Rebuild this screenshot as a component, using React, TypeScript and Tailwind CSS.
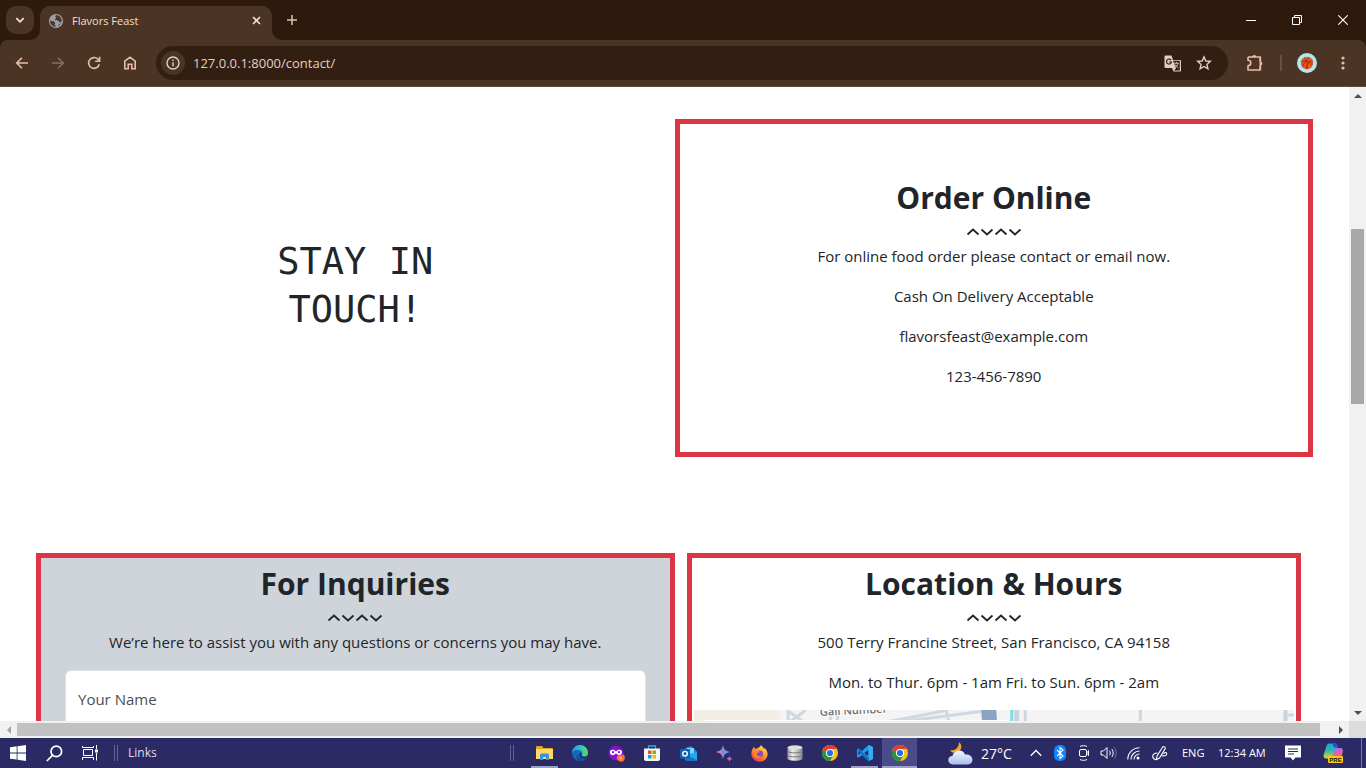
import type { ReactNode } from "react";

const uiFont = "font-['Open_Sans','Noto_Sans',sans-serif]";

function BrowserTabs() {
  return (
    <header className="flex h-10 shrink-0 items-start bg-[#2d1a0d] text-[#f2dfd5]">
      <button aria-label="Search tabs" className="mt-[6px] ml-[6px] flex h-7 w-7 items-center justify-center rounded-[10px] bg-[#4c3424]">
        <svg width="10" height="10" viewBox="0 0 10 10" fill="none" stroke="currentColor" strokeWidth="1.8">
          <path d="M1.3 3.2 5 6.8l3.7-3.6" />
        </svg>
      </button>
      <div className="relative mt-[6px] ml-[6px] flex h-[34px] w-[232px] items-center rounded-t-[10px] bg-[#4c3424] pr-[10px] pb-[5px] pl-2">
        <svg className="absolute bottom-0 -left-[10px]" width="10" height="10">
          <path d="M10 0v10H0A10 10 0 0 0 10 0z" fill="#4c3424" />
        </svg>
        <svg className="absolute -right-[10px] bottom-0" width="10" height="10">
          <path d="M0 0v10h10A10 10 0 0 1 0 0z" fill="#4c3424" />
        </svg>
        <svg width="16" height="16" viewBox="0 0 16 16">
          <circle cx="8" cy="8" r="7.1" fill="#9aa0a6" />
          <path d="M8.4 1.9c-1.500 1-1.700 1.500-.5 2.200 1.300.7-.7 1.500-1 2.500-.3 1 2.900.5 3.700 1.600.5.7.8 1.400 3.100.6a6 6 0 0 0-5.300-6.900zM2.100 7.300c1.500 1.400 4.100.6 4.800 2 .5 1-.3 1.500-.2 2.300.1.800 1.100.7.800 2.300a6 6 0 0 1-5.400-6.600z" fill="#4c3424" />
          <path d="M9.700 4.500l2.300-.3M10 12.800l2.300-2.300" stroke="#4c3424" />
        </svg>
        <span className="ml-2 flex-1 text-[11px] leading-4">Flavors Feast</span>
        <button aria-label="Close tab" className="-mr-[2px] flex h-4 w-4 items-center justify-center rounded-full">
          <svg width="9" height="9" viewBox="0 0 9 9" stroke="currentColor" strokeWidth="1.6">
            <path d="M1 1l7 7M8 1 1 8" />
          </svg>
        </button>
      </div>
      <button aria-label="New tab" className="mt-[6px] ml-[6px] flex h-7 w-7 items-center justify-center text-[#e6bfa8]">
        <svg width="10" height="10" viewBox="0 0 10 10" stroke="currentColor" strokeWidth="1.5">
          <path d="M5 0v10M0 5h10" />
        </svg>
      </button>
      <div className="ml-auto flex text-white">
        <button aria-label="Minimize" className="flex h-10 w-[46px] items-center justify-center">
          <svg width="10" height="10" stroke="currentColor"><path d="M0 5.500h10" /></svg>
        </button>
        <button aria-label="Restore" className="flex h-10 w-[46px] items-center justify-center">
          <svg width="10" height="10" fill="none" stroke="currentColor">
            <path d="M.5 2.500h7v7h-7zM2.500 2.500v-2h7v7h-2" />
          </svg>
        </button>
        <button aria-label="Close window" className="flex h-10 w-[46px] items-center justify-center">
          <svg width="10" height="10" stroke="currentColor" strokeWidth="1.1"><path d="M.3.3l9.400 9.400M9.700.3.3 9.700" /></svg>
        </button>
      </div>
    </header>
  );
}

function ToolButton({ label, dim, children }: { label: string; dim?: boolean; children: ReactNode }) {
  return (
    <button aria-label={label} className={`flex h-9 w-9 shrink-0 items-center justify-center ${dim ? "text-[#8a6c5c]" : "text-[#e6bfa8]"}`}>
      {children}
    </button>
  );
}

function Toolbar() {
  return (
    <div className="shrink-0 bg-[#2d1a0d]">
      <nav className="flex h-[47px] items-center rounded-t-lg border-b border-[#5f4a3d] bg-[#4c3424] pr-[5px] pl-1">
        <ToolButton label="Back">
          <svg width="16" height="16" viewBox="0 0 16 16" fill="none" stroke="currentColor" strokeWidth="1.6"><path d="M14 8H3M8 2.700 2.700 8 8 13.300" /></svg>
        </ToolButton>
        <ToolButton label="Forward" dim>
          <svg width="16" height="16" viewBox="0 0 16 16" fill="none" stroke="currentColor" strokeWidth="1.6"><path d="M2 8h11M8 2.700 13.300 8 8 13.300" /></svg>
        </ToolButton>
        <ToolButton label="Reload">
          <svg width="16" height="16" viewBox="0 0 16 16" fill="none" stroke="currentColor" strokeWidth="1.600"><path d="M13.300 9.200A5.400 5.400 0 1 1 12 4.300l1.300 1.400M13.600 1.800v4.500H9.200" /></svg>
        </ToolButton>
        <ToolButton label="Home">
          <svg width="16" height="16" viewBox="0 0 16 16" fill="none" stroke="currentColor" strokeWidth="1.600"><path d="M2.800 6.200 8 2.200l5.200 4v7.600H9.800V9.300H6.200v4.500H2.800z" /></svg>
        </ToolButton>
        <div className="ml-2 flex h-[34px] flex-1 items-center rounded-full bg-[#331f11] pr-3 pl-[5px] text-[#e0cfc6]">
          <button aria-label="Site information" className="flex h-6 w-6 items-center justify-center rounded-full bg-[#4c3424]">
            <svg width="14" height="14" viewBox="0 0 14 14" fill="none" stroke="currentColor" strokeWidth="1.400"><circle cx="7" cy="7" r="6" /><path d="M7 6.200v4M7 3.400v1.500" /></svg>
          </button>
          <input aria-label="Address" defaultValue="127.0.0.1:8000/contact/" className="ml-2 h-6 min-w-0 flex-1 bg-transparent text-[13px] outline-none" />
          <button aria-label="Translate" className="flex h-8 w-8 items-center justify-center">
            <svg width="17" height="17" viewBox="0 0 17 17">
              <path d="M1.500.5h6l1.500 4.500h7a1 1 0 0 1 1 1v9.500a1 1 0 0 1-1 1H9.500L8 13H1.500a1 1 0 0 1-1-1V1.500a1 1 0 0 1 1-1z" fill="#e0cfc6" />
              <path d="M9 5.800h6.800v9.700H10l2-2.300z" fill="#331f11" />
              <path d="M7.100 5.100A2.500 2.500 0 1 0 7.500 7H5.200" fill="none" stroke="#331f11" strokeWidth="1.200" />
              <path d="M9.800 8.200h5.200M12.400 7v1.200M14 8.400c-.5 2-1.700 3.300-3.500 4.400M10.800 9.500l3.700 3.700" stroke="#e0cfc6" fill="none" strokeWidth=".9" />
            </svg>
          </button>
          <button aria-label="Bookmark this tab" className="-mr-1 flex h-8 w-8 items-center justify-center">
            <svg width="16" height="16" viewBox="0 0 16 16" fill="none" stroke="currentColor" strokeWidth="1.400"><path d="M8 1.900l1.800 4.100 4.500.4-3.400 3 1 4.400L8 11.500l-3.900 2.300 1-4.400-3.400-3 4.500-.4z" /></svg>
          </button>
        </div>
        <div className="ml-[9px] flex items-center">
          <ToolButton label="Extensions">
            <svg width="18" height="18" viewBox="0 0 18 18">
              <path d="M2 3h12.300v4.600M2 3v3.200c3.700.4 3.700 5 0 5.500V16h12.300v-4.500" fill="none" stroke="currentColor" strokeWidth="1.600" strokeLinejoin="round" />
              <path d="M6.200 3a2 2 0 0 1 4 0zM14.300 7.500a2 2 0 0 1 0 4z" fill="currentColor" />
              <path d="M14.300 3v13" stroke="currentColor" strokeWidth="1.600" />
            </svg>
          </ToolButton>
          <span className="mx-[7px] h-4 w-[2px] bg-[#6b4d3b]" />
          <button aria-label="Profile" className="flex h-9 w-9 items-center justify-center">
            <svg width="20" height="20" viewBox="0 0 20 20">
              <circle cx="10" cy="10" r="10" fill="#aee7ef" />
              <circle cx="10" cy="10" r="6.200" fill="#f4511e" />
              <path d="M4.500 8.500c4-1 8-1 10.500 3.500M7 4.800c3 2 4 6 3 11.300M12.500 4.300c-3 3-6 6-7 9.500M15.500 7.500c-4 1-6 4-6.500 8" fill="none" stroke="#6d2b1c" strokeWidth=".7" />
            </svg>
          </button>
          <ToolButton label="Menu">
            <svg width="4" height="16" fill="currentColor"><circle cx="2" cy="3" r="1.600" /><circle cx="2" cy="8" r="1.600" /><circle cx="2" cy="13" r="1.600" /></svg>
          </ToolButton>
        </div>
      </nav>
    </div>
  );
}

function SectionTitle({ children }: { children: ReactNode }) {
  return (
    <>
      <h2 className="text-[30px] leading-9 font-bold">{children}</h2>
      <div className="flex h-7 items-center justify-center pt-[3px]">
        <svg width="56" height="10" viewBox="0 0 56 10" fill="none" stroke="#212529" strokeWidth="1.800">
          <path d="M1.500 7.500 7 2.500l5.500 5M15.500 2.500 21 7.500l5.500-5M29.500 7.500 35 2.500l5.500 5M43.500 2.500 49 7.500l5.500-5" />
        </svg>
      </div>
    </>
  );
}

function LocationMap() {
  return (
    <svg role="img" aria-label="Map" className="mx-[2px] block h-[300px] w-[calc(100%-4px)]" viewBox="0 0 600 300" preserveAspectRatio="xMinYMin slice">
      <rect width="600" height="300" fill="#f4f4f4" />
      <path d="M0 0h84l5 20v280H0z" fill="#f3eee3" />
      <g fill="none" stroke="#ced8e3" strokeWidth="3">
        <path d="M94 0v60M94 1l20 14M94 13l18-13M135 14l2-8M142 14l2-8M180 14l44-8 30-6M252 0l3 14M205 12l85-11" />
        <path d="M331 0v60M446 0v60M593 5h7" />
      </g>
      <path d="M287 0h15l4 60h-15z" fill="#8ba4c4" />
      <path d="M316 0h3v60h-3z" fill="#85d9ec" />
      <path d="M320 0h5v60h-5zM589 0h4v60h-4z" fill="#c9d4dd" />
      <text x="126" y="6" transform="rotate(-3 126 6)" fontFamily="Open Sans, sans-serif" fontSize="11" fontWeight="600" fill="#6c7075" stroke="#fff" strokeWidth="2" paintOrder="stroke">Gali Number</text>
      <rect x="10" y="10" width="304" height="90" rx="2" fill="#fff" />
    </svg>
  );
}

function Page() {
  return (
    <main className="min-w-0 flex-1 overflow-hidden bg-white px-9 pt-8 text-center text-[15px] leading-6 text-[#212529]">
      <section className="grid grid-cols-2">
        <div className="flex items-center justify-center pb-1">
          <h1 className="font-['DejaVu_Sans_Mono',monospace] text-[37px] leading-12">
            STAY IN
            <br />
            TOUCH!
          </h1>
        </div>
        <article className="border-[5px] border-[#dc3545] px-3 pt-14 pb-12">
          <SectionTitle>Order Online</SectionTitle>
          <p className="mb-4">For online food order please contact or email now.</p>
          <p className="mb-4">Cash On Delivery Acceptable</p>
          <p className="mb-4">flavorsfeast@example.com</p>
          <p className="mb-4">123-456-7890</p>
        </article>
      </section>
      <section className="mt-24 grid grid-cols-2 items-start">
        <form className="border-[5px] border-[#dc3545] bg-[#ced4da] px-6 pt-2 pb-6">
          <SectionTitle>For Inquiries</SectionTitle>
          <p className="mb-4">We’re here to assist you with any questions or concerns you may have.</p>
          <input aria-label="Your Name" placeholder="Your Name" className="h-[58px] w-full rounded-md border border-[#dee2e6] bg-white px-3 placeholder:text-[#4c5054]" />
        </form>
        <div className="px-3">
          <article className="border-[5px] border-[#dc3545] pt-2">
            <SectionTitle>Location &amp; Hours</SectionTitle>
            <p className="mb-4">500 Terry Francine Street, San Francisco, CA 94158</p>
            <p className="mb-4">Mon. to Thur. 6pm - 1am Fri. to Sun. 6pm - 2am</p>
            <LocationMap />
          </article>
        </div>
      </section>
    </main>
  );
}

function Arrow({ d, fill = "#505050" }: { d: string; fill?: string }) {
  return (
    <span className="flex h-[17px] w-[17px] shrink-0 items-center justify-center">
      <svg width="8" height="8"><path d={d} fill={fill} /></svg>
    </span>
  );
}

function VerticalScrollbar() {
  return (
    <div className="flex w-[17px] shrink-0 flex-col items-center bg-[#f1f1f1]">
      <Arrow d="M0 6h8L4 2z" />
      <span className="grow-[125]" />
      <span className="w-[13px] grow-[175] bg-[#a8a8a8]" />
      <span className="grow-[300]" />
      <Arrow d="M0 2h8L4 6z" />
    </div>
  );
}

function HorizontalScrollbar() {
  return (
    <div className="flex h-[17px] shrink-0 items-center bg-[#f1f1f1]">
      <Arrow d="M6 0v8L2 4z" fill="#a3a3a3" />
      <span className="h-[13px] flex-1 bg-[#c1c1c1]" />
      <span className="w-3" />
      <Arrow d="M2 0v8l4-4z" />
      <span className="h-[17px] w-[17px] bg-[#dcdcdc]" />
    </div>
  );
}

function ChromeLogo() {
  return (
    <svg width="16" height="16" viewBox="0 0 16 16">
      <circle cx="8" cy="8" r="8" fill="#fbc116" />
      <path d="M1.070 4A8 8 0 0 1 14.930 4H8a4 4 0 0 0-3.460 6z" fill="#e33b2e" />
      <path d="M1.070 4A8 8 0 0 0 8 16l3.460-6a4 4 0 0 1-6.920 0z" fill="#229342" />
      <circle cx="8" cy="8" r="4" fill="#fff" />
      <circle cx="8" cy="8" r="3.100" fill="#1a73e8" />
    </svg>
  );
}

function TaskApp({ label, wide, open, active, children }: { label: string; wide?: boolean; open?: boolean; active?: boolean; children: ReactNode }) {
  return (
    <button aria-label={label} className={`flex h-full shrink-0 flex-col items-center ${wide ? "w-9" : "w-[35px]"} ${active ? "bg-[#4b4b8a]" : ""}`}>
      <span className="flex flex-1 items-center">{children}</span>
      {(open || active) && <span className={`-mt-[2px] h-[2px] bg-[#a09fc4] ${active ? "w-full" : "w-[27px]"}`} />}
    </button>
  );
}

function TrayButton({ label, width, children }: { label: string; width: string; children: ReactNode }) {
  return (
    <button aria-label={label} className={`flex h-full shrink-0 items-center justify-center ${width}`}>
      {children}
    </button>
  );
}

function Divider() {
  return <span className="h-4 w-1 shrink-0 border-x border-[#62618f]" />;
}

function Taskbar() {
  return (
    <footer className="flex h-[30px] shrink-0 items-center bg-[#2b2a64] text-white">
      <TrayButton label="Start" width="w-9">
        <svg width="16" height="16" viewBox="0 0 16 16" fill="currentColor"><path d="M0 2.300 6.700 1.300v6.200H0zM7.500 1.200 16 0v7.500H7.500zM0 8.400h6.700v6.200L0 13.700zM7.500 8.400H16V16l-8.500-1.200z" /></svg>
      </TrayButton>
      <TrayButton label="Search" width="w-9">
        <svg width="17" height="17" viewBox="0 0 17 17" fill="none" stroke="currentColor" strokeWidth="1.700"><circle cx="10.300" cy="6.400" r="5.300" /><path d="M6.500 10.300.8 16" /></svg>
      </TrayButton>
      <TrayButton label="Task view" width="w-9">
        <svg width="17" height="16" viewBox="0 0 17 16" fill="none" stroke="currentColor"><path d="M1.500 4.500h9v6h-9zM.5 1v1.500h11V1M.5 15v-2.500h11V15M14.500 0v4M14.500 8v7.500" /><path d="M13 4.500h3v3h-3z" fill="currentColor" stroke="none" /></svg>
      </TrayButton>
      <span className="w-[6px]" />
      <Divider />
      <a href="#links" className="ml-[10px] text-[12px] text-[#dedeea]">Links</a>

      <span className="flex-1" />
      <Divider />
      <span className="w-3" />
      <TaskApp label="File Explorer" wide open>
        <svg width="17" height="14" viewBox="0 0 17 14"><path d="M0 1a1 1 0 0 1 1-1h5l1.500 2H16a1 1 0 0 1 1 1v3H0z" fill="#e8a317" /><path d="M0 3h17v10H0z" fill="#ffd769" /><path d="M4 14V9a1.500 1.500 0 0 1 1.500-1.500h6A1.500 1.500 0 0 1 13 9v5h-3v-3H7v3z" fill="#3596d8" /></svg>
      </TaskApp>
      <TaskApp label="Edge" wide>
        <svg width="16" height="16" viewBox="0 0 16 16">
          <defs><linearGradient id="edge" x1="0" x2="1"><stop stopColor="#1a9de0" /><stop offset=".6" stopColor="#34c6c0" /><stop offset="1" stopColor="#65d949" /></linearGradient></defs>
          <circle cx="8" cy="8" r="8" fill="#1568bd" />
          <path d="M0 8a8 8 0 0 1 16 0c0 2-1.500 3.500-3.700 3.500-1.700 0-3-.7-2.300-1.700C11.500 6.500 8 5 5.500 5 3 5 .8 6 0 8z" fill="url(#edge)" />
          <path d="M5.300 9.500c.2 3 3.200 5 7.200 3.900A8 8 0 0 1 8 16c-3-.8-4.500-4-2.700-6.500z" fill="#124b8b" />
          <path d="M9.600 8.500c-.8 1.600.6 3.600 3.100 3.300 1.300-.1 2.300-.6 3-1.600-.4 1.300-1.200 2.400-2 3-4 1.300-6.800-.8-6.800-3.200 0-1.600 2.200-2.400 2.700-1.500z" fill="#2b2a64" />
        </svg>
      </TaskApp>
      <TaskApp label="Private browsing" wide>
        <svg width="17" height="17" viewBox="0 0 17 17"><circle cx="8" cy="8" r="7.500" fill="#8510cf" /><path d="M8 6.700C6.500 4.300 2 4 2 7.200c0 3.600 4.200 3.600 5.300 1.600h1.400c1.100 2 5.300 2 5.300-1.600C14 4 9.500 4.300 8 6.700z" fill="#fff" /><circle cx="5" cy="7.200" r="1.100" fill="#8510cf" /><circle cx="11" cy="7.200" r="1.100" fill="#8510cf" /><path d="M8.500 12.500c.3-2 2-1.500 3-3 .5 1 3 1 4-.5 1.500 2 1.800 4 .8 6-1.800 3-6.800 2.500-7.800-2.500z" fill="#ff6b36" /><circle cx="12.700" cy="13" r="1.500" fill="#ffb34d" /></svg>
      </TaskApp>
      <TaskApp label="Store" wide>
        <svg width="16" height="16" viewBox="0 0 16 16"><path d="M4.500 4V1h7v3" fill="none" stroke="#2fa9e5" strokeWidth="1.300" /><path d="M0 3.500h16V14a2 2 0 0 1-2 2H2a2 2 0 0 1-2-2z" fill="#f5f5f7" /><path d="M4 5.500h3.500V9H4z" fill="#f25022" /><path d="M8.500 5.500H12V9H8.500z" fill="#7fba00" /><path d="M4 10h3.500v3.500H4z" fill="#00a4ef" /><path d="M8.500 10H12v3.500H8.500z" fill="#ffb900" /></svg>
      </TaskApp>
      <TaskApp label="Outlook" wide>
        <svg width="17" height="15" viewBox="0 0 17 15"><path d="M5 2 11 0l6 5.500V13a1 1 0 0 1-1 1H5z" fill="#1685d9" /><path d="M7 2h7v6H7z" fill="#77d6fb" /><path d="M5 9l12-3v8a1 1 0 0 1-1 1H6z" fill="#28a8ea" /><path d="M6 9l11 5-1 1H6z" fill="#1574c4" /><rect y="3" width="10" height="9.500" rx="1" fill="#0a66b7" /><circle cx="5" cy="7.700" r="2.300" fill="none" stroke="#fff" strokeWidth="1.400" /></svg>
      </TaskApp>
      <TaskApp label="Assistant" wide>
        <svg width="17" height="17" viewBox="0 0 17 17"><defs><linearGradient id="spark" x1="0" x2="1" y1=".6" y2=".4"><stop offset=".1" stopColor="#f07a72" /><stop offset=".5" stopColor="#8488e0" /><stop offset="1" stopColor="#4e9af4" /></linearGradient></defs><path d="M7 0c1 4.500 2.500 6 7 7-4.500 1-6 2.500-7 7-1-4.500-2.500-6-7-7 4.500-1 6-2.500 7-7z" fill="url(#spark)" /><path d="M13.500 10.500c.4 2 1.200 2.800 3.200 3.200-2 .4-2.800 1.200-3.200 3.200-.4-2-1.200-2.800-3.200-3.200 2-.4 2.800-1.200 3.200-3.200z" fill="#cc6aa0" /></svg>
      </TaskApp>
      <TaskApp label="Firefox">
        <svg width="17" height="17" viewBox="0 0 17 17"><defs><linearGradient id="fox" x1=".8" x2=".2" y2="1"><stop stopColor="#ffe043" /><stop offset=".5" stopColor="#ff9228" /><stop offset="1" stopColor="#f52863" /></linearGradient></defs><path d="M1.500 4 3 1.800l1 2 2-.3C7 2.500 9 2.500 10 0c1 1.500 2.500 2 3 4l.8-1C17 6 17.500 10.500 15 13.700c-3.200 4.200-9.800 4-12.900.1C-.3 10.800 0 6.800 1.500 4z" fill="url(#fox)" /><circle cx="8.700" cy="9" r="3.400" fill="#8b43d8" /><path d="M2.500 6C5 4.500 6 6 8.500 6.500 8 8 6 7.500 5.500 9c.5 2.500 3 3 5 1.500-1 3.500-6.500 3-8-.500z" fill="#ff8a22" /></svg>
      </TaskApp>
      <TaskApp label="Database">
        <svg width="16" height="16" viewBox="0 0 16 16"><defs><linearGradient id="disk" x2="1"><stop stopColor="#a0a0a0" /><stop offset=".35" stopColor="#f1f1f1" /><stop offset="1" stopColor="#858585" /></linearGradient></defs><path d="M.5 2.500v11c0 3 15 3 15 0v-11z" fill="url(#disk)" /><ellipse cx="8" cy="2.500" rx="7.500" ry="2.200" fill="#dedede" /><path d="M.5 6c0 2.500 15 2.500 15 0M.5 10c0 2.500 15 2.500 15 0" fill="none" stroke="#7a7a7a" /></svg>
      </TaskApp>
      <TaskApp label="Chrome"><ChromeLogo /></TaskApp>
      <TaskApp label="VS Code" open>
        <svg width="16" height="16" viewBox="0 0 16 16"><path d="M11.500 0 16 2v12l-4.500 2L5 10l-3.600 2.700L0 12V4l1.400-.7L5 6z" fill="#1f9cf0" /><path d="M11.500 4.700 7.300 8l4.200 3.300zM1.500 5.800v4.400L3.700 8z" fill="#2b2a64" /><path d="M11.500 0 16 2v12l-4.500 2z" fill="#35adf5" /><path d="M0 4l1.400-.7L12 13l-.5 3z" fill="#0874bd" /></svg>
      </TaskApp>
      <TaskApp label="Chrome, Flavors Feast" active><ChromeLogo /></TaskApp>

      <button aria-label="Weather" className="ml-[31px] flex h-full items-center text-[14px]">
        <svg width="25" height="23" viewBox="0 0 25 23"><defs><linearGradient id="cloud" x2="0" y2="1"><stop stopColor="#f1f5ff" /><stop offset="1" stopColor="#a8bfec" /></linearGradient></defs><path d="M11 0c3.500 3 3 8-1 10-3 1.500-6 .800-8-1.500 6 0 9-3.500 9-8.500z" fill="#f8a52a" /><path d="M5.500 22.500C-1.500 22.500-1 14 4.500 14 6 7.500 15 6.500 17 12.500c9-1 10 9.500 2.500 10z" fill="url(#cloud)" /></svg>
        <span className="ml-2 w-9 text-left">27°C</span>
      </button>
      <TrayButton label="Show hidden icons" width="w-9 ml-[1px]">
        <svg width="12" height="8" fill="none" stroke="currentColor" strokeWidth="1.300"><path d="M.7 6.800 6 1.500l5.300 5.300" /></svg>
      </TrayButton>
      <TrayButton label="Bluetooth" width="w-3">
        <svg width="12" height="16" viewBox="0 0 12 16"><rect width="12" height="16" rx="5" fill="#0a84ff" /><path d="M3 5l6 6-3 2.500v-11L9 5l-6 6" fill="none" stroke="#fff" strokeWidth="1.100" /></svg>
      </TrayButton>
      <TrayButton label="Meet now" width="w-9">
        <svg width="12" height="16" viewBox="0 0 12 16" fill="none" stroke="currentColor"><rect x="1.500" y="4.500" width="7" height="7" rx="1.500" /><path d="M8.500 7h2V5.500v5V9h-2M2 1.500c1.500-1.100 5.500-1.100 7 0M2 14.500c1.500 1.100 5.500 1.100 7 0" /></svg>
      </TrayButton>
      <TrayButton label="Volume" width="w-3">
        <svg className="shrink-0" width="17" height="14" viewBox="0 0 17 14" fill="none" stroke="currentColor"><path d="M1 5h2.500L7 1.500v11L3.500 9H1zM9.500 4.700c1 1.300 1 3.300 0 4.600M11.700 3c2 2.300 2 5.700 0 8" /><path d="M14 1.300c3 3.300 3 8.100 0 11.400" stroke="#7877a5" /></svg>
      </TrayButton>
      <TrayButton label="Network" width="w-[38px]">
        <svg width="13" height="13" viewBox="0 0 13 13" fill="none" stroke="currentColor" strokeWidth="1.100"><path d="M.8 12.500C.8 6 6 .8 12.500.8M4 12.500C4 7.800 7.800 4 12.500 4M7 12.500C7 9.500 9.500 7 12.500 7" /><circle cx="11" cy="11" r="1.500" fill="currentColor" stroke="none" /></svg>
      </TrayButton>
      <TrayButton label="Pen" width="w-4">
        <svg className="shrink-0" width="16" height="16" viewBox="0 0 16 16" fill="none" stroke="currentColor" strokeWidth="1.100"><path d="M5 11 10.500 2.200c1-1.500 3.500 0 2.500 1.700L7.500 13 4.500 14.500zM5.500 8C2 8 0 10 1 12.500c.5 1.500 3 2.500 3.500 2M9.800 10.700c4 .5 5.500-.500 4.700-2.700-.5-1-1.800-.5-3 .8" /></svg>
      </TrayButton>
      <span className="ml-[14px] w-9 text-[11px]">ENG</span>
      <time className="w-[49px] text-[11px] whitespace-nowrap">12:34 AM</time>
      <TrayButton label="Notifications" width="w-[52px]">
        <svg width="16" height="16" viewBox="0 0 16 16"><path d="M0 .5h16v12h-5.500L8 15.500l-2.500-3H0z" fill="#fff" /><path d="M3 4h10M3 6.500h10M3 9h6" stroke="#2b2a64" /></svg>
      </TrayButton>
      <TrayButton label="Copilot" width="w-7">
        <svg width="21" height="20" viewBox="0 0 21 20"><defs><linearGradient id="co1" x2="0" y2="1"><stop stopColor="#16a6df" /><stop offset=".5" stopColor="#31b9a0" /><stop offset="1" stopColor="#f3d52e" /></linearGradient><linearGradient id="co2" x2="0" y2="1"><stop stopColor="#a66af0" /><stop offset=".6" stopColor="#ee5f94" /><stop offset="1" stopColor="#ff935a" /></linearGradient></defs><path d="M11 5h6c3 0 3.500 2 2.500 5l-1.500 6h-9z" fill="url(#co2)" /><path d="M6 .5h6c2 0 2.500 2 3 4-3 0-3 1-4 4L9.500 13c-1 2-2 2.500-5 2.500-4 0-4.500-2-3.500-5L3.500 3C4 1.500 4.500.5 6 .5z" fill="url(#co1)" /><path d="M9 0h3c2 0 2.500 2 3 4.500h-4z" fill="#224ed6" /><rect x="5" y="13" width="15" height="7" rx="1" fill="#ffc51b" /><text x="12.500" y="18.800" textAnchor="middle" fontFamily="Liberation Sans, sans-serif" fontSize="6" fontWeight="700" fill="#111">PRE</text></svg>
      </TrayButton>
      <span className="mr-1 ml-[14px] h-full w-px bg-[#77769f]" />
    </footer>
  );
}

export default function App() {
  return (
    <div className={`flex h-screen flex-col overflow-hidden bg-white ${uiFont}`}>
      <BrowserTabs />
      <Toolbar />
      <div className="flex min-h-0 flex-1">
        <Page />
        <VerticalScrollbar />
      </div>
      <HorizontalScrollbar />
      <Taskbar />
    </div>
  );
}
